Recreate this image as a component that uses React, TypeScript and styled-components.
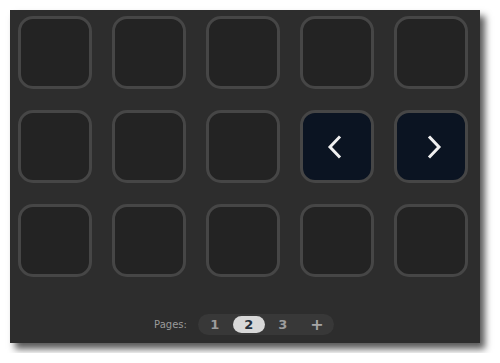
import styled, { createGlobalStyle } from 'styled-components';

const GlobalStyle = createGlobalStyle`
  html, body {
    margin: 0;
    padding: 0;
    background: #ffffff;
  }
  body {
    font-family: 'DejaVu Sans', Verdana, sans-serif;
  }
`;

const Page = styled.div`
  padding: 10px;
`;

const Panel = styled.div`
  width: 470px;
  height: 333px;
  box-sizing: border-box;
  background: #2d2d2d;
  box-shadow: 5px 6px 7px rgba(0, 0, 0, 0.65);
  padding: 6px 12px 8px 8px;
  display: flex;
  flex-direction: column;
`;

const Grid = styled.div`
  display: grid;
  grid-template-columns: repeat(5, 74px);
  grid-auto-rows: 74px;
  gap: 20px;
`;

const Tile = styled.button<{ $nav?: boolean }>`
  box-sizing: border-box;
  width: 74px;
  height: 73px;
  margin: 0;
  padding: 0;
  border: 3px solid #464646;
  border-radius: 15px;
  background: ${({ $nav }) => ($nav ? '#0b1422' : '#232323')};
  display: flex;
  align-items: center;
  justify-content: center;
  cursor: pointer;
`;

const ChevronSvg = styled.svg<{ $dir: 'left' | 'right' }>`
  display: block;
  margin-left: ${({ $dir }) => ($dir === 'right' ? '6px' : '0')};
  margin-right: ${({ $dir }) => ($dir === 'left' ? '6px' : '0')};
`;

const Pager = styled.div`
  margin-top: auto;
  display: flex;
  align-items: center;
  justify-content: center;
  padding-left: 2px;
`;

const Label = styled.span`
  font-size: 10px;
  color: #9a9a9a;
  margin-right: 11px;
`;

const PagePill = styled.div`
  display: flex;
  align-items: center;
  gap: 2px;
  padding: 2px 1px;
  border-radius: 11px;
  background: #383838;
`;

const PageButton = styled.button<{ $active?: boolean; $add?: boolean }>`
  width: 32px;
  height: 17px;
  margin: 0;
  padding: 0;
  border: none;
  border-radius: 9px;
  font-family: 'DejaVu Sans', Verdana, sans-serif;
  font-size: ${({ $add }) => ($add ? '16px' : '13px')};
  font-weight: bold;
  line-height: 17px;
  color: ${({ $active, $add }) => ($active ? '#26303c' : $add ? '#a6a6a6' : '#9c9c9c')};
  background: ${({ $active }) => ($active ? '#d8d8d8' : 'transparent')};
  cursor: pointer;
`;

const Chevron = ({ dir }: { dir: 'left' | 'right' }) => (
  <ChevronSvg $dir={dir} width="15" height="24" viewBox="0 0 15 24">
    <path
      d={dir === 'left' ? 'M12 2.5 L3 12 L12 21.5' : 'M3 2.5 L12 12 L3 21.5'}
      fill="none"
      stroke="#f0f0f0"
      strokeWidth="3"
      strokeLinecap="square"
    />
  </ChevronSvg>
);

const tiles = Array.from({ length: 15 }, (_, i) => i);

export default function App() {
  return (
    <>
      <GlobalStyle />
      <Page>
        <Panel>
          <Grid>
            {tiles.map(i => (
              <Tile key={i} $nav={i === 8 || i === 9}>
                {i === 8 && <Chevron dir="left" />}
                {i === 9 && <Chevron dir="right" />}
              </Tile>
            ))}
          </Grid>
          <Pager>
            <Label>Pages:</Label>
            <PagePill>
              <PageButton>1</PageButton>
              <PageButton $active>2</PageButton>
              <PageButton>3</PageButton>
              <PageButton $add>+</PageButton>
            </PagePill>
          </Pager>
        </Panel>
      </Page>
    </>
  );
}
